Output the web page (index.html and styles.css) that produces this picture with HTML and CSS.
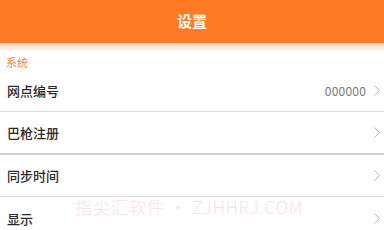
FILE: index.html
```html
<!DOCTYPE html>
<html lang="zh-CN">
<head>
<meta charset="utf-8">
<link rel="stylesheet" href="styles.css">
</head>
<body>
<div class="page">
  <header class="topbar"><span class="title">设置</span></header>
  <div class="band"></div>
  <div class="section-label">系统</div>
  <div class="row">
    <span class="label">网点编号</span>
    <span class="right"><span class="value">000000</span><svg class="chev" width="6" height="11" viewBox="0 0 6 11"><polyline points="0.5,0.5 5.5,5.5 0.5,10.5" fill="none" stroke="#b8b8b8" stroke-width="1"/></svg></span>
  </div>
  <div class="row thick">
    <span class="label">巴枪注册</span>
    <span class="right"><svg class="chev" width="6" height="11" viewBox="0 0 6 11"><polyline points="0.5,0.5 5.5,5.5 0.5,10.5" fill="none" stroke="#b8b8b8" stroke-width="1"/></svg></span>
  </div>
  <div class="row">
    <span class="label">同步时间</span>
    <span class="right"><svg class="chev" width="6" height="11" viewBox="0 0 6 11"><polyline points="0.5,0.5 5.5,5.5 0.5,10.5" fill="none" stroke="#b8b8b8" stroke-width="1"/></svg></span>
  </div>
  <div class="row last">
    <span class="label">显示</span>
    <span class="right"><svg class="chev" width="6" height="11" viewBox="0 0 6 11"><polyline points="0.5,0.5 5.5,5.5 0.5,10.5" fill="none" stroke="#b8b8b8" stroke-width="1"/></svg></span>
  </div>
  <div class="watermark">指尖汇软件 • ZJHHRJ.COM</div>
</div>
</body>
</html>
```
FILE: styles.css
```css
html, body {
  margin: 0;
  padding: 0;
  background: #ffffff;
}
body {
  font-family: "Noto Sans CJK SC", "Noto Sans", sans-serif;
  width: 384px;
  height: 230px;
  overflow: hidden;
}
.page {
  position: relative;
  display: flex;
  flex-direction: column;
}
.topbar {
  height: 43px;
  background: #ff7a24;
  display: flex;
  align-items: center;
  justify-content: center;
}
.title {
  color: #ffffff;
  font-size: 15px;
  font-weight: 700;
  margin-top: -2px;
}
.band {
  height: 7px;
  background: linear-gradient(#fcd6c0, #fdf1ea);
}
.section-label {
  height: 20px;
  display: flex;
  align-items: center;
  padding-left: 6px;
  font-size: 11px;
  color: #f3864a;
  padding-top: 3px;
  box-sizing: border-box;
}
.row {
  height: 42px;
  box-sizing: border-box;
  border-bottom: 1px solid #dcdcdc;
  display: flex;
  align-items: center;
  justify-content: space-between;
  padding: 0 4px 0 7px;
}
.row.thick {
  height: 43px;
  border-bottom: 2px solid #cfcfcf;
}
.row.last {
  border-bottom: none;
}
.label {
  font-size: 13px;
  font-weight: 500;
  color: #2a2a2a;
}
.right {
  display: flex;
  align-items: center;
  gap: 8px;
}
.value {
  font-size: 12px;
  color: #777777;
  letter-spacing: 0.2px;
}
.chev {
  display: block;
}
.watermark {
  position: absolute;
  left: 75px;
  top: 194px;
  font-size: 17px;
  font-weight: 300;
  letter-spacing: 1px;
  color: #fde0e6;
  white-space: nowrap;
  pointer-events: none;
}
```
